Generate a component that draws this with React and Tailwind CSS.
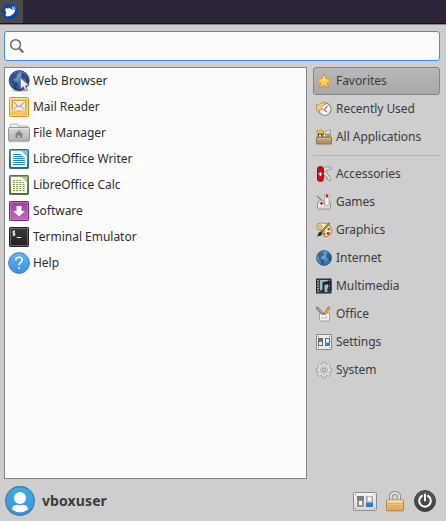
import React from "react";

function Svg({ w, h = w, children }) {
  return (
    <svg width={w} height={h} viewBox={`0 0 ${w} ${h}`} className="block shrink-0 overflow-visible">
      {children}
    </svg>
  );
}

function Grad({ id, from, to }) {
  return (
    <linearGradient id={id} x1="0" y1="0" x2="0" y2="1">
      <stop offset="0" stopColor={from} />
      <stop offset="1" stopColor={to} />
    </linearGradient>
  );
}

/* ---------- launcher icons, 22px ---------- */

const WebIcon = () => (
  <Svg w={22}>
    <defs>
      <radialGradient id="web" cx=".4" cy=".25" r=".8">
        <stop offset="0" stopColor="#7ba5d8" />
        <stop offset=".5" stopColor="#3f6fb0" />
        <stop offset="1" stopColor="#1d3d75" />
      </radialGradient>
    </defs>
    <ellipse cx="11" cy="20.5" rx="8" ry="1.5" fill="#00000030" />
    <circle cx="11.2" cy="10.6" r="10" fill="url(#web)" stroke="#1e3c6c" strokeWidth=".9" />
    <path d="M3 5.5 6 3l4-1.5 1 1.5-2 1.5.5 2L7 8.5 5 9l1 2.5 3 1 1 2-1.5 2.5-1 2.5-2-2L5 14l-2.5-3zM13 2.5l3 1 3 4 1.5 4-2-.5-1.5-3-2 1-2-2 1-2z" fill="#1b3567" opacity=".65" />
    <path d="M12.3 7.5v11.7l2.9-2.5 2.2 4.3 2.1-1-2.1-4.1 3.8-.3z" fill="#ececec" stroke="#6a6c6f" strokeWidth=".9" />
  </Svg>
);

const MailIcon = () => (
  <Svg w={22}>
    <defs><Grad id="mail" from="#f8ce62" to="#eea51f" /></defs>
    <rect x="1.5" y="1.5" width="19" height="19" rx="1" fill="url(#mail)" stroke="#d09727" />
    <rect x="2.5" y="2.5" width="17" height="17" fill="none" stroke="#ffe39b" />
    <path d="M4 4h14v10l-2 2H6l-2-2z" fill="#dfa33f" />
    <rect x="5" y="5" width="12" height="9.5" fill="#eeeeec" />
    <path d="m5.500 6 5.500 5 5.500-5M5.500 14l3.800-4.200M16.500 14l-3.800-4.200" fill="none" stroke="#a8a8a8" strokeWidth="1.1" />
    <path d="M2.500 14h4l1.500 2h6l1.500-2h4v5.500h-17z" fill="#f8c650" stroke="#ffe08c" strokeWidth=".8" />
  </Svg>
);

const FolderIcon = () => (
  <Svg w={22}>
    <defs><Grad id="folder" from="#d7d7d7" to="#b2b2b2" /></defs>
    <path d="M2.500 8V3q0-1 1-1H9q1 0 1 1v1h9.500v5z" fill="#f2f2f2" stroke="#aaa" strokeWidth=".9" />
    <rect x=".5" y="5.5" width="21" height="13.5" rx=".8" fill="url(#folder)" stroke="#979797" />
    <path d="M1.500 6.500h19" stroke="#e8e8e8" />
    <path d="m11 8.500 4.500 4.200h-1.200V16h-2.100v-2.200H9.800V16H7.700v-3.300H6.500z" fill="#858585" />
    <path d="M1 20h20" stroke="#00000022" />
  </Svg>
);

const WriterIcon = () => (
  <Svg w={22}>
    <defs><Grad id="writer" from="#6aaedb" to="#16659b" /></defs>
    <rect x="1.5" y="1.5" width="19" height="19" rx=".7" fill="url(#writer)" stroke="#2a6c9b" />
    <path d="M3 3h11l5 5v11H3z" fill="#fff" />
    <path d="M13.500 3H19v5.500z" fill="#77c3f0" />
    <path d="M5 6.500h8M5 8.500h10M5 10.500h12M5 12.500h12M5 14.500h12M5 16.500h12" stroke="#278ac8" />
  </Svg>
);

const CalcIcon = () => (
  <Svg w={22}>
    <defs><Grad id="calc" from="#87a768" to="#496b30" /></defs>
    <rect x="1.5" y="1.5" width="19" height="19" rx=".7" fill="url(#calc)" stroke="#557440" />
    <path d="M3 3h11l5 5v11H3z" fill="#fff" />
    <path d="M13.500 3H19v5.500z" fill="#b0d38b" />
    <path d="M5 6.500h8M5 8.500h11M5 10.500h12M5 12.500h12M5 14.500h12M5 16.500h12" stroke="#6d9b3d" strokeDasharray="2 1.2" />
  </Svg>
);

const SoftwareIcon = () => (
  <Svg w={22}>
    <defs><Grad id="soft" from="#97408f" to="#c767c8" /></defs>
    <rect x="1.5" y="1.5" width="19" height="19" rx=".7" fill="url(#soft)" stroke="#722b77" />
    <rect x="2.5" y="2.5" width="17" height="17" fill="none" stroke="#c67fc7" strokeWidth=".7" />
    <path d="M8.500 6h5v5H17l-6 5.500L5 11h3.500z" fill="#fff" />
  </Svg>
);

const TerminalIcon = () => (
  <Svg w={22}>
    <defs><Grad id="term" from="#3b3b3b" to="#202020" /></defs>
    <rect x="1.5" y="1.5" width="19" height="19" rx=".7" fill="url(#term)" stroke="#232323" />
    <rect x="2.5" y="2.5" width="17" height="17" fill="none" stroke="#777" strokeWidth=".8" />
    <path d="M7 5.300H5v1.900h1.900v1.900H4.500M5.900 4.300v5.800M8.800 11.500h4.400" fill="none" stroke="#f0f0f0" />
  </Svg>
);

const HelpIcon = () => (
  <Svg w={22}>
    <defs><Grad id="help" from="#62b5f4" to="#398de5" /></defs>
    <circle cx="11" cy="11" r="10.4" fill="url(#help)" stroke="#3b82cb" />
    <path d="M7.700 8.200Q7.900 5.300 11 5.300q3.200 0 3.200 2.700 0 1.500-1.700 2.500-1.400.9-1.400 2.700" fill="none" stroke="#fff" strokeWidth="1.6" />
    <circle cx="11.1" cy="16" r="1.1" fill="#fff" />
  </Svg>
);

/* ---------- category icons, 16px ---------- */

const StarIcon = () => (
  <Svg w={16}>
    <defs><Grad id="star" from="#ffe78e" to="#f9bd35" /></defs>
    <path d="m8 .8 2.200 4.800 5.200.6-3.900 3.600 1.100 5.300L8 12.500l-4.600 2.600 1.100-5.300L.6 6.200l5.200-.6z" fill="url(#star)" stroke="#cf933c" strokeLinejoin="round" />
  </Svg>
);

const RecentIcon = () => (
  <Svg w={16}>
    <circle cx="8.800" cy="8.200" r="6.300" fill="#f1f1ef" stroke="#8b8b86" strokeWidth="1.200" />
    <path d="m8 9 3.800-4.300M8 9l3.200 1.800" stroke="#666" />
    <path d="M8 9l3-3.500" stroke="#d14b3d" strokeWidth=".6" />
    <path d="M.5 3 2 4.300Q4.600 1 8.800 1.600l.8 2Q6.300 3.500 5.200 6.500L7 8.500.5 9.500z" fill="#f0ce80" stroke="#bd9244" strokeWidth=".8" />
  </Svg>
);

const AllIcon = () => (
  <Svg w={16}>
    <defs><Grad id="all" from="#c9ad80" to="#a88a5b" /></defs>
    <path d="M1 .8l2 1.200 1-1.500 3 1V8H1z" fill="#e3c53a" stroke="#b29723" strokeWidth=".7" />
    <path d="M7.500 2.500h3l1-1L14.500.8v7h-7z" fill="#dde3d8" stroke="#90958c" strokeWidth=".8" />
    <path d="M11 4.500h4v3.500h-4z" fill="#86ac66" />
    <rect x="2.5" y="5" width="3" height="3.5" fill="#fff" stroke="#4b356c" />
    <rect x="7" y="5" width="3" height="3.5" fill="#f2f2f2" stroke="#4b356c" strokeWidth=".7" />
    <path d="M1.500 7.500 0 9h16l-1.500-1.500z" fill="#9a7f53" />
    <rect x=".5" y="8.5" width="15" height="6.5" rx=".5" fill="url(#all)" stroke="#92774c" />
    <path d="M1.300 9.400h13.400" stroke="#dfcba7" strokeWidth=".8" />
  </Svg>
);

const AccessoriesIcon = () => (
  <Svg w={16}>
    <path d="M7.500 2.500 10 .8l4.500.4.800 2-1.300.8-1.500-1-1.800 1 .3 3 4 6.500-.5 1.300-2-.5L7.500 9z" fill="#e4e4e4" stroke="#8f8f8f" strokeWidth=".9" />
    <path d="m8 7 2.500-2.500M8 9.500l2 .5 2.500 4" fill="none" stroke="#8d8d8d" strokeWidth=".9" />
    <rect x="1.500" y=".7" width="5.800" height="14.600" rx="2" fill="#d20d12" stroke="#a00a0f" />
    <path d="M4.400 6v4M2.400 8h4" stroke="#fff" strokeWidth="1.200" />
  </Svg>
);

const GamesIcon = () => (
  <Svg w={16}>
    <rect x="1.500" y="8.500" width="13" height="6.500" rx=".8" fill="#ececec" stroke="#8e8e8e" />
    <path d="M2.500 13h11" stroke="#c4c4c4" />
    <path d="M3.500 6.500h4v6h-4z" fill="#f4f4f4" />
    <path d="m1 2 5.500 5" stroke="#858585" strokeWidth="1.200" />
    <path d="M2.500 8.500V6.500h5v4h1.500" fill="none" stroke="#aaa" strokeWidth=".8" />
    <path d="M5.500 7.800v3.200M3.900 9.400h3.200" stroke="#d61414" strokeWidth="1.400" />
    <path d="M8.700 1.300q0-.8.800-.8h2.800q.8 0 .8.800v10H8.700z" fill="#f7f7f7" stroke="#999" strokeWidth=".8" />
    <rect x="9.800" y=".6" width="2.300" height="3" rx=".6" fill="#d61414" />
  </Svg>
);

const GraphicsIcon = () => (
  <Svg w={16}>
    <path d="M1 4Q2 1 6 1q6-.3 8.500 4 2.500 5-1 8-3.500 3-6 .5Q6 12 8 10 9 8 6 8 0 8 1 4z" fill="#fbefd2" stroke="#c98a2e" strokeWidth="1.200" />
    <circle cx="4.500" cy="4.700" r="1.700" fill="#cdcdcd" stroke="#c98a2e" strokeWidth=".8" />
    <circle cx="12.800" cy="7.300" r="1.300" fill="#3b6cb0" />
    <circle cx="12" cy="11.200" r="1.500" fill="#d92020" />
    <circle cx="8.500" cy="12" r="1.200" fill="#5c9a28" />
    <path d="M13.500 1 5 10.500" stroke="#8a5418" strokeWidth="2.100" />
    <path d="M13.200 1.200 6 9.200" stroke="#e2a24c" />
    <path d="M.5 14.500Q2.500 13.500 2.500 11q1.500-2 3.500 0 .5 3-5.500 3.500z" fill="#252525" />
  </Svg>
);

const InternetIcon = () => (
  <Svg w={16}>
    <defs>
      <radialGradient id="net" cx=".4" cy=".3" r=".75">
        <stop offset="0" stopColor="#7cc0ee" />
        <stop offset="1" stopColor="#1f629f" />
      </radialGradient>
    </defs>
    <circle cx="8" cy="8" r="7.5" fill="url(#net)" stroke="#3a6890" strokeWidth=".9" />
    <path d="m2 4 2.500-2L8 1.500l-.5 2L9 5 6.500 6.500l-2 1 1 1.500 3 1.500-.5 2-2 2-1-3L3 8.500zM10.500 3H13l2 3v4l-2 1-1-3-2-1z" fill="#194168" opacity=".62" />
  </Svg>
);

const MultimediaIcon = () => (
  <Svg w={16}>
    <rect x=".5" y="1" width="14.500" height="14" fill="#3b4043" stroke="#25292b" />
    <rect x="4" y="2" width="8" height="12" fill="#9bbaca" />
    <path d="M2 2v12M13.700 2v12" stroke="#d5dadc" strokeWidth="1.200" strokeDasharray="1.500 1.200" />
    <path d="M7.500 13V5l7-1.500V12" fill="none" stroke="#202325" strokeWidth="1.900" />
    <path d="m8 6 6-1.300" stroke="#202325" strokeWidth="2.300" />
    <ellipse cx="6.500" cy="13.300" rx="2.400" ry="1.900" fill="#303437" />
    <ellipse cx="13.300" cy="12" rx="2.400" ry="1.900" fill="#303437" />
  </Svg>
);

const OfficeIcon = () => (
  <Svg w={16}>
    <path d="M3.500 7h10v6q0 2-2 2h-6q-2 0-2-2z" fill="#f3f3f3" stroke="#999" strokeWidth=".9" />
    <path d="m1.200 2 6 6.500" stroke="#777" strokeWidth="2.600" strokeLinecap="round" />
    <path d="m1.600 2.300 5 5.300" stroke="#d2d2d2" strokeWidth=".9" />
    <path d="M13.500 1 8.500 8.500" stroke="#a96f22" strokeWidth="2.600" />
    <path d="M13.300 1.500 8.700 8.300" stroke="#f3b65b" strokeWidth="1.200" />
    <path d="M4 8q4.500 2 9 0v3H4z" fill="#f6f6f6" />
    <path d="M5.500 12h2" stroke="#e9b9ab" strokeWidth="2" />
    <circle cx="10" cy="11.500" r="1.500" fill="#b9cfe9" />
  </Svg>
);

const SettingsIcon = () => (
  <Svg w={16}>
    <rect x=".5" y=".5" width="15" height="15" rx=".5" fill="#ececec" stroke="#898989" />
    <rect x="2.500" y="4.500" width="4" height="7" fill="#eee" stroke="#626262" />
    <path d="M3 5h3v3H3z" fill="#737373" />
    <rect x="9.500" y="4.500" width="4" height="7" fill="#fff" stroke="#656565" />
    <path d="M9 8.500h5V12H9z" fill="#3185d5" />
    <path d="M2 2.500h1M13 2.500h1M2 13.500h1M13 13.500h1" stroke="#999" />
  </Svg>
);

const SystemIcon = () => (
  <Svg w={16}>
    <path
      d="M6.700.6h2.600l.4 2 1.400.6 1.700-1.200 1.800 1.800-1.200 1.700.6 1.400 2 .4v2.600l-2 .4-.6 1.400 1.200 1.700-1.800 1.800-1.700-1.200-1.400.6-.4 2H6.700l-.4-2-1.400-.6-1.700 1.200-1.800-1.800 1.200-1.700-.6-1.400-1.700-.4V7.300l1.700-.4.6-1.400-1.200-1.700 1.800-1.800 1.700 1.200 1.400-.6z"
      transform="translate(0 -.6)" fill="#dedede" stroke="#a0a0a0" strokeWidth=".9"
    />
    <circle cx="8" cy="8" r="3.700" fill="#d3d3d3" stroke="#b0b0b0" strokeWidth=".9" />
    <circle cx="8" cy="8" r="1.700" fill="#cecece" stroke="#999" />
  </Svg>
);

/* ---------- panel and footer icons ---------- */

const XfceMouse = () => (
  <Svg w={16}>
    <circle cx="8" cy="7.500" r="8" fill="#0b47a6" />
    <path d="M3 4.200l1 .8.300-1.200 1.200 1 .7-1.400.8 1.500 1-1.500.6 1.500 1.700.8 2-.4 1 1.200-.6 1.200-1.500 2.300-3 1.900-3 .6-1.900-1.200.9-2.200-.8-2.700z" fill="#fff" />
    <path d="M10.500 2.500l-.2 3M12.500 2l-1.200 3M14 3.500l-1.700 2" stroke="#dbe7fa" strokeWidth=".8" />
  </Svg>
);

const SearchIcon = () => (
  <Svg w={16}>
    <circle cx="5.600" cy="6.600" r="4.900" fill="none" stroke="#6b6b6b" strokeWidth="1.500" />
    <path d="m9.400 10.400 3.900 4" stroke="#6b6b6b" strokeWidth="2.200" />
  </Svg>
);

const Avatar = () => (
  <Svg w={30}>
    <defs>
      <Grad id="avatar" from="#3daee2" to="#3b91e6" />
      <clipPath id="avatarClip"><circle cx="15" cy="15" r="13.700" /></clipPath>
    </defs>
    <circle cx="15" cy="15" r="14.400" fill="url(#avatar)" stroke="#46779a" strokeWidth="1.100" />
    <circle cx="15" cy="12" r="6" fill="#fff" />
    <path d="M7 23.500q0-4 5-4.800 3 1.300 6 0 5 .8 5 4.800-3.500 2.700-8 2.700T7 23.500z" fill="#fff" clipPath="url(#avatarClip)" />
  </Svg>
);

const SwitchesIcon = () => (
  <Svg w={24} h={20}>
    <defs><Grad id="plate" from="#f4f4f4" to="#d6d6d6" /></defs>
    <rect x=".5" y="1.500" width="23" height="18" rx="1" fill="url(#plate)" stroke="#8e8e8e" />
    <rect x="4.500" y="5.500" width="6" height="10" fill="#d0d0d0" stroke="#9a9a9a" />
    <path d="M4 5h7v4H4z" fill="#7b7b7b" />
    <rect x="5.500" y="9.500" width="4" height="5" fill="#fff" stroke="#888" />
    <rect x="13.500" y="5.500" width="6" height="10" fill="#e8e8e8" stroke="#aaa" />
    <rect x="14.500" y="5.500" width="4" height="5" fill="#fff" stroke="#aaa" strokeWidth=".7" />
    <path d="M13 11.500h7V16h-7z" fill="#297bcc" />
    <path d="M2 3.500h1M21 3.500h1M2 17.500h1M21 17.500h1" stroke="#888" />
  </Svg>
);

const LockIcon = () => (
  <Svg w={18} h={20}>
    <defs><Grad id="lock" from="#f8d6a0" to="#e5a24a" /></defs>
    <path d="M4.800 10V6q0-4 4.200-4t4.200 4v4" fill="none" stroke="#7c7c7c" strokeWidth="3.500" />
    <path d="M4.800 10V6q0-4 4.200-4t4.200 4v4" fill="none" stroke="#e2e2e2" strokeWidth="1.900" />
    <rect x=".5" y="9" width="17" height="10.800" rx=".5" fill="url(#lock)" stroke="#b58442" />
    <path d="M1.500 10h15" stroke="#ffebca" />
    <path d="M2 12.500h14M2 14.500h14M2 16.500h14" stroke="#dc9e50" strokeWidth=".6" />
  </Svg>
);

const PowerIcon = () => (
  <Svg w={22}>
    <defs><Grad id="power" from="#575757" to="#3f3f3f" /></defs>
    <circle cx="11" cy="11" r="10.500" fill="url(#power)" stroke="#444" />
    <path d="M8 5.900a5.800 5.800 0 1 0 6 0" fill="none" stroke="#fff" strokeWidth="2" strokeLinecap="round" />
    <path d="M11 4.500v6" stroke="#fff" strokeWidth="2" strokeLinecap="round" />
  </Svg>
);

const launchers = [
  ["Web Browser", WebIcon],
  ["Mail Reader", MailIcon],
  ["File Manager", FolderIcon],
  ["LibreOffice Writer", WriterIcon],
  ["LibreOffice Calc", CalcIcon],
  ["Software", SoftwareIcon],
  ["Terminal Emulator", TerminalIcon],
  ["Help", HelpIcon],
];

const views = [
  ["Favorites", StarIcon],
  ["Recently Used", RecentIcon],
  ["All Applications", AllIcon],
];

const categories = [
  ["Accessories", AccessoriesIcon],
  ["Games", GamesIcon],
  ["Graphics", GraphicsIcon],
  ["Internet", InternetIcon],
  ["Multimedia", MultimediaIcon],
  ["Office", OfficeIcon],
  ["Settings", SettingsIcon],
  ["System", SystemIcon],
];

function Category({ label, Icon, active }) {
  return (
    <button
      className={`flex h-7 w-full items-center gap-1 rounded-[3px] border px-[2px] text-left tracking-[-0.05px] ${
        active ? "border-[#858585] bg-linear-to-b from-[#b8b8b8] to-[#a9a9a9]" : "border-transparent"
      }`}
    >
      <Icon />
      <span className="whitespace-nowrap leading-4">{label}</span>
    </button>
  );
}

export default function App() {
  return (
    <div className="flex h-[521px] w-[446px] flex-col overflow-hidden bg-[#cecece] font-['Noto_Sans',sans-serif] text-[12px] text-[#3c3c3c]">
      <header className="flex h-6 shrink-0 border-b border-[#151218] bg-[#2d2439]">
        <div className="flex w-[23px] items-center bg-[#4b4b4b] pl-[2px]">
          <XfceMouse />
        </div>
      </header>

      <main className="flex flex-1 flex-col border-t border-[#8b8888] pl-1 pr-[6px] pt-[6px]">
        <div className="flex h-[30px] shrink-0 items-center rounded-[3px] border border-[#3f8fe5] bg-[#fcfcfc] pl-[5px]">
          <SearchIcon />
        </div>

        <div className="mt-[6px] flex h-[412px] gap-[6px]">
          <ul className="w-[303px] border border-[#858585] bg-[#fcfcfc] pl-[3px] text-[#2d2d2d]">
            {launchers.map(([label, Icon]) => (
              <li key={label} className="flex h-[26px] items-center gap-[3px] tracking-[-0.02px]">
                <Icon />
                <span className="whitespace-nowrap leading-4">{label}</span>
              </li>
            ))}
          </ul>

          <nav className="flex-1">
            {views.map(([label, Icon], i) => (
              <Category key={label} label={label} Icon={Icon} active={i === 0} />
            ))}
            <hr className="my-1 border-[#b5b5b5]" />
            {categories.map(([label, Icon]) => (
              <Category key={label} label={label} Icon={Icon} />
            ))}
          </nav>
        </div>

        <footer className="mt-[7px] flex h-[30px] items-center pl-px pr-1">
          <Avatar />
          <span className="ml-[7px] flex-1 text-[14px] font-bold leading-5 tracking-[0.1px]">vboxuser</span>
          <div className="flex items-center">
            <SwitchesIcon />
            <div className="ml-[9px] mr-[10px]">
              <LockIcon />
            </div>
            <PowerIcon />
          </div>
        </footer>
      </main>
    </div>
  );
}
